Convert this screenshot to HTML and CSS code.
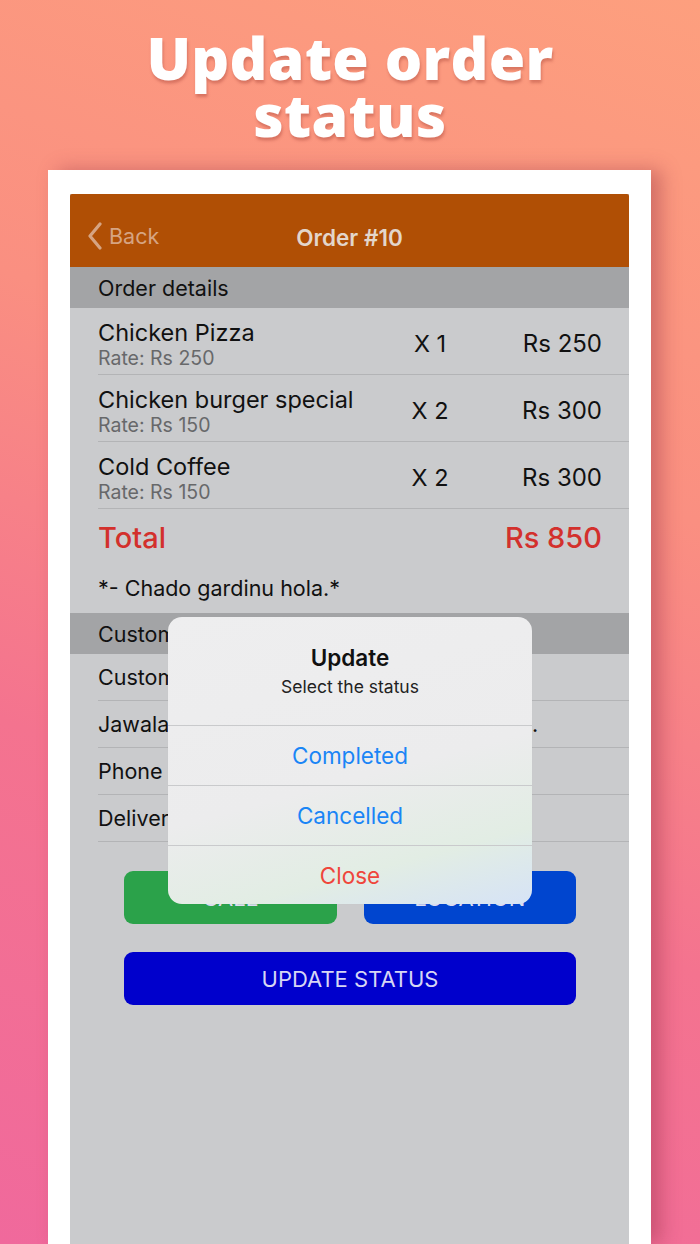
FILE: index.html
```html
<!DOCTYPE html>
<html>
<head>
<meta charset="utf-8">
<link rel="stylesheet" href="styles.css">
</head>
<body>
<div class="page">
  <h1 class="hero"><span class="hero-line">Update order</span><span class="hero-line">status</span></h1>
  <div class="frame">
    <div class="screen">
      <div class="nav">
        <div class="back">
          <svg class="chev" width="16" height="28" viewBox="0 0 16 28"><path d="M13 2 L3 14 L13 26" fill="none" stroke="currentColor" stroke-width="3.2" stroke-linecap="round" stroke-linejoin="round"/></svg>
          <span>Back</span>
        </div>
        <div class="nav-title">Order #10</div>
      </div>
      <div class="section-head">Order details</div>
      <div class="item">
        <div class="item-name"><div class="name">Chicken Pizza</div><div class="rate">Rate: Rs 250</div></div>
        <div class="qty">X 1</div>
        <div class="price">Rs 250</div>
      </div>
      <div class="item">
        <div class="item-name"><div class="name">Chicken burger special</div><div class="rate">Rate: Rs 150</div></div>
        <div class="qty">X 2</div>
        <div class="price">Rs 300</div>
      </div>
      <div class="item">
        <div class="item-name"><div class="name">Cold Coffee</div><div class="rate">Rate: Rs 150</div></div>
        <div class="qty">X 2</div>
        <div class="price">Rs 300</div>
      </div>
      <div class="total"><span>Total</span><span>Rs 850</span></div>
      <div class="note">*- Chado gardinu hola.*</div>
      <div class="section-head">Customer details</div>
      <div class="info">Customer: Ram Bahadur</div>
      <div class="info"><span class="addr">Jawalakhel, Lalitpur, near the zoo gate</span>.</div>
      <div class="info">Phone number: 9841000000</div>
      <div class="info">Delivery: ASAP</div>
      <div class="btn-row">
        <div class="btn call">CALL</div>
        <div class="btn loc">LOCATION</div>
      </div>
      <div class="btn update">UPDATE STATUS</div>

      <div class="alert">
        <div class="alert-head">
          <div class="alert-title">Update</div>
          <div class="alert-msg">Select the status</div>
        </div>
        <div class="alert-btn blue">Completed</div>
        <div class="alert-btn blue">Cancelled</div>
        <div class="alert-btn red">Close</div>
      </div>
    </div>
  </div>
</div>
</body>
</html>
```

FILE: styles.css
```css
* { box-sizing: border-box; }
html, body { margin: 0; padding: 0; }
body {
  width: 700px;
  height: 1244px;
  overflow: hidden;
  background: linear-gradient(200deg, #fd9f7e 0%, #fa8f81 35%, #f4738f 65%, #f0699c 100%);
  font-family: Inter, "Liberation Sans", sans-serif;
}
.page {
  display: flex;
  flex-direction: column;
  align-items: flex-start;
  height: 1244px;
}
.hero {
  margin: 0;
  width: 700px;
  padding-top: 29px;
  height: 170px;
  display: flex;
  flex-direction: column;
  align-items: center;
  color: #fff;
  font-family: "Open Sans", sans-serif;
  font-weight: 800;
  font-size: 59px;
  letter-spacing: 0.3px;
  text-shadow: 1px 3px 3px rgba(150, 50, 40, 0.35);
}
.hero-line {
  display: block;
  height: 57px;
  line-height: 57px;
}
.frame {
  margin-left: 48px;
  width: 603px;
  flex: 1;
  background: #fff;
  padding: 24px 22px 0 22px;
  box-shadow: 10px 0 18px rgba(140, 40, 60, 0.38);
  display: flex;
}
.screen {
  position: relative;
  flex: 1;
  background: #cacbcd;
  display: flex;
  flex-direction: column;
}
.nav {
  height: 73px;
  background: #b04f05;
  display: flex;
  align-items: center;
  justify-content: center;
  position: relative;
  border-radius: 2px 2px 0 0;
}
.back {
  position: absolute;
  left: 17px;
  top: 28px;
  display: flex;
  align-items: center;
  gap: 6px;
  color: #d6a482;
  font-size: 21.5px;
}
.chev { display: block; }
.nav-title {
  color: #e3d6cb;
  font-size: 22.5px;
  font-weight: 600;
  margin-top: 14px;
}
.section-head {
  height: 41px;
  background: #a3a4a6;
  padding-left: 28px;
  display: flex;
  align-items: center;
  font-size: 21.5px;
  color: #111;
}
.item {
  margin-left: 28px;
  height: 67px;
  border-bottom: 1px solid #b3b4b6;
  display: flex;
  align-items: center;
  padding-right: 27px;
  padding-top: 7px;
}
.item-name { flex: 1; }
.name { font-size: 23.5px; color: #111; line-height: 27px; }
.rate { font-size: 19.5px; color: #67686a; line-height: 25px; }
.qty { width: 80px; text-align: center; font-size: 23.5px; color: #111; margin-right: 32px; margin-top: -3px; }
.price { width: 100px; text-align: right; font-size: 24px; color: #111; margin-top: -3px; }
.total {
  margin-left: 28px;
  padding-right: 27px;
  height: 57px;
  display: flex;
  justify-content: space-between;
  align-items: center;
  color: #d3302c;
  font-size: 29px;
  font-weight: 500;
}
.note {
  height: 47px;
  padding-left: 28px;
  display: flex;
  align-items: center;
  font-size: 21.5px;
  color: #111;
  padding-bottom: 4px;
}
.info {
  margin-left: 28px;
  height: 47px;
  border-bottom: 1px solid #b3b4b6;
  display: flex;
  align-items: center;
  font-size: 21.5px;
  color: #111;
  white-space: nowrap;
  overflow: hidden;
}
.addr {
  display: inline-block;
  width: 434px;
  overflow: hidden;
}
.btn-row {
  display: flex;
  gap: 27px;
  margin: 29px 53px 0 54px;
}
.btn {
  height: 53px;
  border-radius: 9px;
  display: flex;
  align-items: center;
  justify-content: center;
  font-size: 22px;
  color: #dcdcf0;
}
.btn-row .btn { flex: 1; }
.call { background: #2ba24a; }
.loc { background: #0045cf; }
.update {
  margin: 28px 53px 0 54px;
  background: #0000cc;
  color: #d6d6f4;
}
.alert {
  position: absolute;
  left: 98px;
  top: 423px;
  width: 364px;
  border-radius: 14px;
  overflow: hidden;
  background: linear-gradient(165deg, #eeeeef 0%, #ececed 55%, #e2ede4 80%, #d6e3f6 100%);
  box-shadow: 0 0 1px rgba(0,0,0,0.05);
}
.alert-head {
  height: 108px;
  display: flex;
  flex-direction: column;
  align-items: center;
  padding-top: 27px;
}
.alert-title { font-size: 22.5px; font-weight: 600; color: #111; line-height: 27px; }
.alert-msg { font-size: 17.5px; color: #222; line-height: 25px; margin-top: 3px; }
.alert-btn {
  height: 60px;
  border-top: 1px solid #c9cacc;
  display: flex;
  align-items: center;
  justify-content: center;
  font-size: 22.5px;
}
.alert-btn:last-child { height: 59px; }
.blue { color: #1a85f6; }
.red { color: #ef463b; }
```
